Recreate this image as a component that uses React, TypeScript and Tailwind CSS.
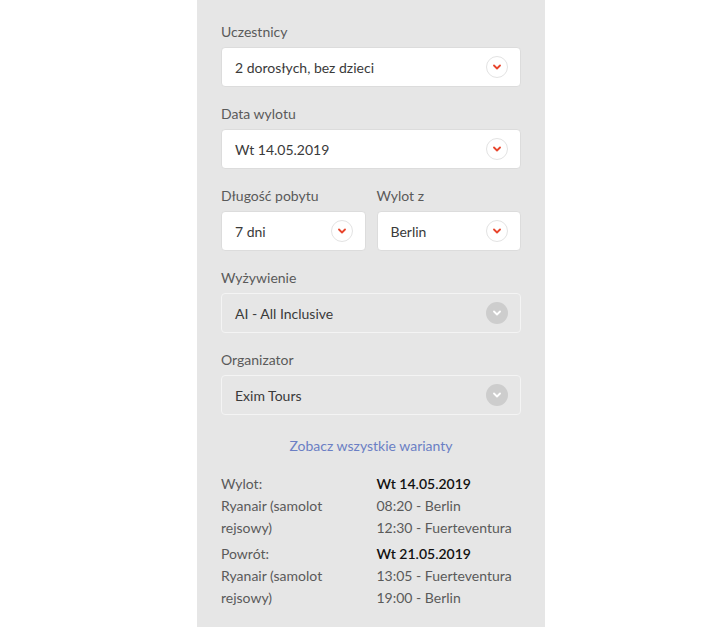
import React from "react";

function Chevron({ color }: { color: string }) {
  return (
    <svg width="8" height="6" viewBox="0 0 8 6" fill="none">
      <path d="M1 1.5l3 3 3-3" stroke={color} strokeWidth="1.8" strokeLinecap="round" strokeLinejoin="round" />
    </svg>
  );
}

function Select({ value, disabled = false }: { value: string; disabled?: boolean }) {
  return (
    <div
      className={
        disabled
          ? "flex h-10 items-center justify-between rounded-[4px] border border-[#f4f4f4] bg-[#e6e6e6] pl-[13px] pr-[12px]"
          : "flex h-10 items-center justify-between rounded-[4px] border border-[#dcdcdc] bg-white pl-[13px] pr-[12px]"
      }
    >
      <span className="text-[14px] text-[#3a3a3a]">{value}</span>
      {disabled ? (
        <span className="flex h-[22px] w-[22px] items-center justify-center rounded-full bg-[#cdcdcd]">
          <Chevron color="#ffffff" />
        </span>
      ) : (
        <span className="flex h-[22px] w-[22px] items-center justify-center rounded-full border border-[#e3e3e3] bg-white">
          <Chevron color="#e8452c" />
        </span>
      )}
    </div>
  );
}

function Field({ label, children }: { label: string; children: React.ReactNode }) {
  return (
    <div>
      <div className="mb-[5px] h-5 text-[14px] leading-5 text-[#5a5a5a]">{label}</div>
      {children}
    </div>
  );
}

export default function App() {
  return (
    <div className="min-h-[627px] bg-white" style={{ fontFamily: "Lato, 'Liberation Sans', sans-serif" }}>
      <div className="ml-[197px] min-h-[627px] w-[348px] bg-[#e6e6e6] px-6 pt-[22px]">
        <div className="flex flex-col gap-[17px]">
          <Field label="Uczestnicy">
            <Select value="2 dorosłych, bez dzieci" />
          </Field>
          <Field label="Data wylotu">
            <Select value="Wt 14.05.2019" />
          </Field>
          <div className="grid grid-cols-2 gap-[11px]">
            <Field label="Długość pobytu">
              <Select value="7 dni" />
            </Field>
            <Field label="Wylot z">
              <Select value="Berlin" />
            </Field>
          </div>
          <Field label="Wyżywienie">
            <Select value="AI - All Inclusive" disabled />
          </Field>
          <Field label="Organizator">
            <Select value="Exim Tours" disabled />
          </Field>
        </div>
        <div className="mt-[21px] text-center text-[14px] leading-5 text-[#6b7fc4]">Zobacz wszystkie warianty</div>
        <div className="mt-[17px] flex flex-col gap-[4px] text-[14px] leading-[22px] text-[#5a5a5a]">
          <div className="grid grid-cols-2 gap-[11px]">
            <div>
              <div>Wylot:</div>
              <div>Ryanair (samolot rejsowy)</div>
            </div>
            <div>
              <div className="font-semibold text-[#111]">Wt 14.05.2019</div>
              <div>08:20 - Berlin</div>
              <div>12:30 - Fuerteventura</div>
            </div>
          </div>
          <div className="grid grid-cols-2 gap-[11px]">
            <div>
              <div>Powrót:</div>
              <div>Ryanair (samolot rejsowy)</div>
            </div>
            <div>
              <div className="font-semibold text-[#111]">Wt 21.05.2019</div>
              <div>13:05 - Fuerteventura</div>
              <div>19:00 - Berlin</div>
            </div>
          </div>
        </div>
      </div>
    </div>
  );
}
